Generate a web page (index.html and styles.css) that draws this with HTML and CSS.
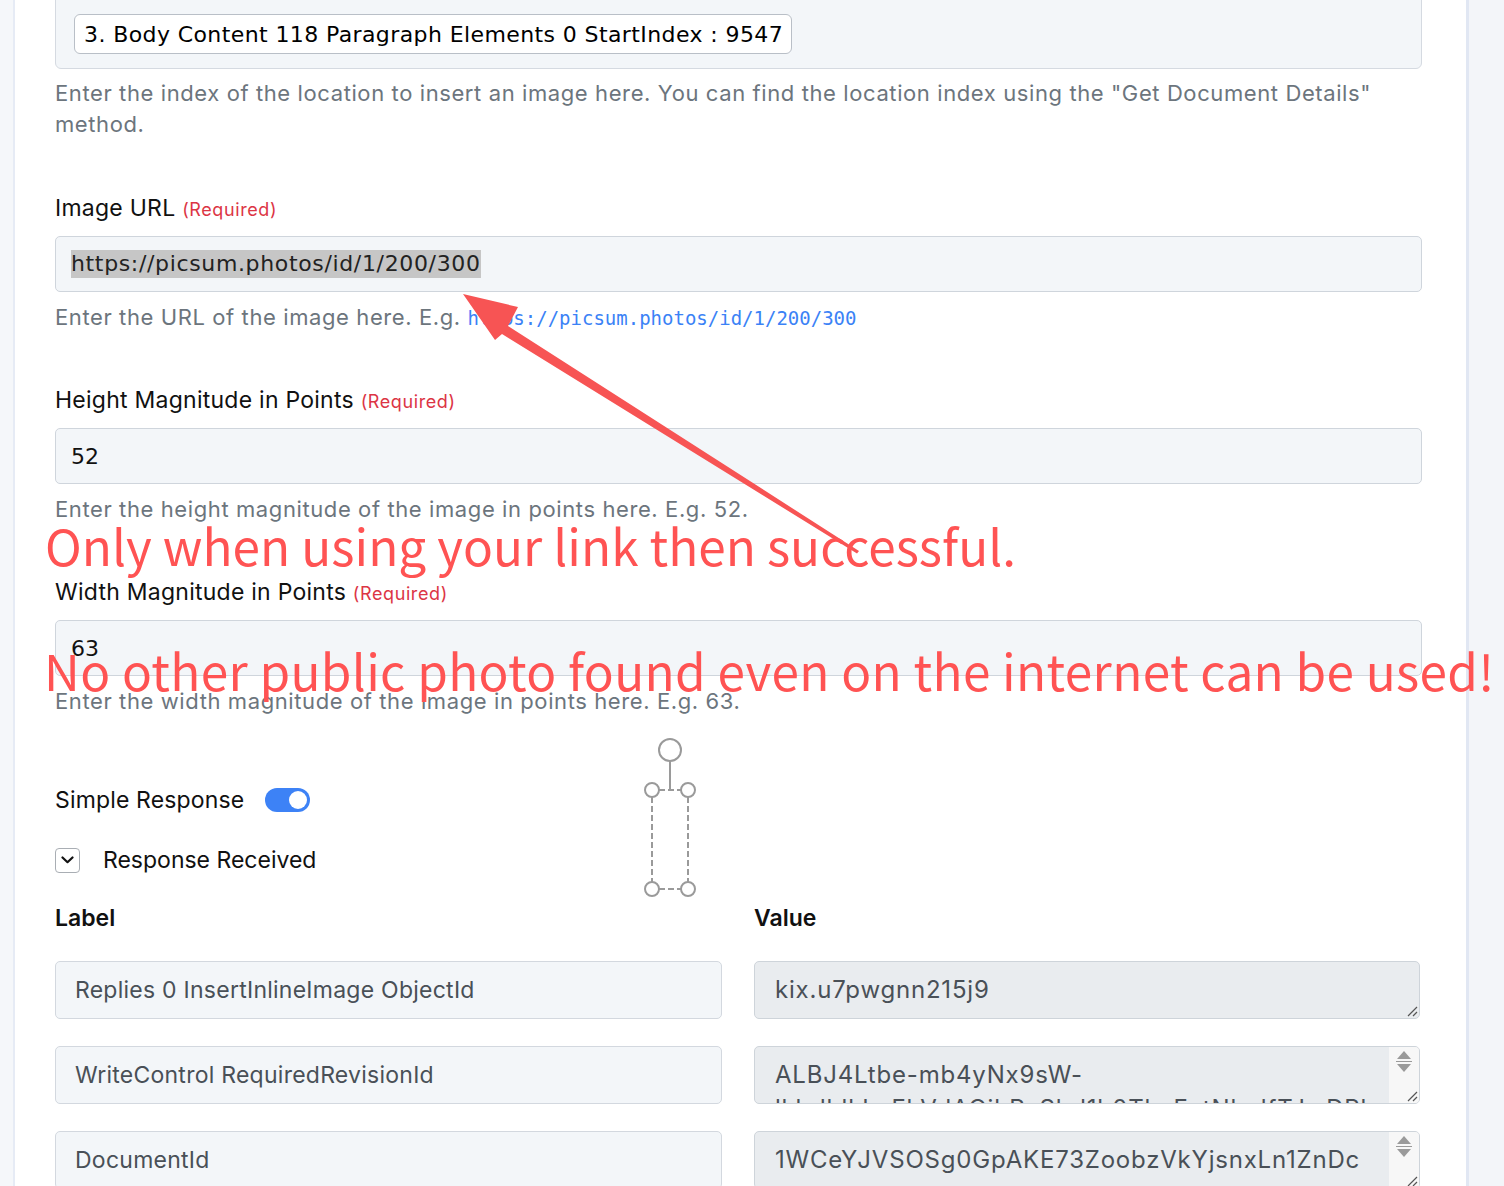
FILE: index.html
```html
<!DOCTYPE html>
<html lang="en">
<head>
<meta charset="utf-8">
<title>Insert Image</title>
<link rel="stylesheet" href="styles.css">
</head>
<body>
<div class="page">
  <div class="gutter-left"></div>
  <main class="panel">
    <div class="index-box">
      <div class="chip">3. Body Content 118 Paragraph Elements 0 StartIndex : 9547</div>
    </div>
    <p class="help help-first">Enter the index of the location to insert an image here. You can find the location index using the "Get Document Details" method.</p>

    <div class="field">
      <div class="label">Image URL <span class="req">(Required)</span></div>
      <div class="input"><span class="sel">https://picsum.photos/id/1/200/300</span></div>
      <p class="help">Enter the URL of the image here. E.g. <code class="link">https://picsum.photos/id/1/200/300</code></p>
    </div>

    <div class="field">
      <div class="label">Height Magnitude in Points <span class="req">(Required)</span></div>
      <div class="input">52</div>
      <p class="help">Enter the height magnitude of the image in points here. E.g. 52.</p>
    </div>

    <div class="field">
      <div class="label">Width Magnitude in Points <span class="req">(Required)</span></div>
      <div class="input">63</div>
      <p class="help">Enter the width magnitude of the image in points here. E.g. 63.</p>
    </div>

    <div class="switch-row">
      <span>Simple Response</span>
      <span class="toggle"><span class="knob"></span></span>
    </div>

    <div class="collapse-row">
      <span class="chev"><svg width="13" height="8" viewBox="0 0 13 8"><path d="M1.5 1.5 L6.5 6.2 L11.5 1.5" fill="none" stroke="#111" stroke-width="2.2" stroke-linecap="round" stroke-linejoin="round"/></svg></span>
      <span>Response Received</span>
    </div>

    <div class="grid">
      <div class="col-head">Label</div>
      <div class="col-head">Value</div>

      <div class="cell">Replies 0 InsertInlineImage ObjectId</div>
      <div class="value">kix.u7pwgnn215j9
        <svg class="grip" width="14" height="14" viewBox="0 0 14 14"><path d="M13 4 L4 13 M13 9 L9 13" stroke="#555" stroke-width="1.2"/></svg>
      </div>

      <div class="cell">WriteControl RequiredRevisionId</div>
      <div class="value has-scroll">ALBJ4Ltbe-mb4yNx9sW-<br>lkbdhlkLuFhVdAOjhRcSbd1h0TkgFxtNbnlfTJwDPl
        <div class="scrollbar"><span class="up"></span><span class="sep"></span><span class="down"></span></div>
        <svg class="grip" width="14" height="14" viewBox="0 0 14 14"><path d="M13 4 L4 13 M13 9 L9 13" stroke="#555" stroke-width="1.2"/></svg>
      </div>

      <div class="cell">DocumentId</div>
      <div class="value has-scroll">1WCeYJVSOSg0GpAKE73ZoobzVkYjsnxLn1ZnDc
        <div class="scrollbar"><span class="up"></span><span class="sep"></span><span class="down"></span></div>
        <svg class="grip" width="14" height="14" viewBox="0 0 14 14"><path d="M13 4 L4 13 M13 9 L9 13" stroke="#555" stroke-width="1.2"/></svg>
      </div>
    </div>
  </main>
  <div class="gutter-right"></div>
</div>

<svg class="arrow" width="1504" height="1186" viewBox="0 0 1504 1186">
  <polygon points="463,294 518,307 508,326 859,551 857,553.5 502,334 495,340" fill="#f75454"/>
</svg>

<svg class="handles" width="60" height="170" viewBox="640 735 60 170">
  <g fill="none" stroke="#9a9a9a" stroke-width="2">
    <circle cx="670" cy="750" r="11"/>
    <line x1="670" y1="761" x2="670" y2="790"/>
    <circle cx="652" cy="790" r="7"/>
    <circle cx="688" cy="790" r="7"/>
    <circle cx="652" cy="889" r="7"/>
    <circle cx="688" cy="889" r="7"/>
    <g stroke-dasharray="6 3">
      <line x1="659" y1="790" x2="681" y2="790"/>
      <line x1="659" y1="889" x2="681" y2="889"/>
      <line x1="652" y1="797" x2="652" y2="882"/>
      <line x1="688" y1="797" x2="688" y2="882"/>
    </g>
  </g>
</svg>

<div class="note note-one">Only when using your link then successful.</div>
<div class="note note-two">No other public photo found even on the internet can be used!</div>
</body>
</html>
```

FILE: styles.css
```css
* { box-sizing: border-box; }

html, body {
  margin: 0;
  padding: 0;
  height: 100%;
  overflow: hidden;
}

body {
  background: #f4f6fa;
  font-family: "Inter", "Lato", sans-serif;
  color: #111;
  position: relative;
}

.page {
  display: flex;
  min-height: 1186px;
}

.gutter-left {
  width: 15px;
  flex: none;
  background: #f5f7fa;
  border-right: 2px solid #e6ebf5;
}

.gutter-right {
  width: 38px;
  flex: none;
  background: #f3f5f9;
  border-left: 3px solid #e1e7f3;
}

.panel {
  flex: 1;
  background: #fff;
  padding: 0 44px 0 40px;
  display: flex;
  flex-direction: column;
}

.index-box {
  margin-top: -10px;
  background: #f3f6f9;
  border: 1px solid #d5dae1;
  border-radius: 6px;
  padding: 23px 18px 14px;
}

.chip {
  display: inline-flex;
  align-items: center;
  height: 40px;
  padding: 0 8px 0 9px;
  background: #fff;
  border: 1px solid #b9bfc7;
  border-radius: 6px;
  font-family: "DejaVu Sans", "Verdana", sans-serif;
  font-size: 22px;
  letter-spacing: 0.4px;
  color: #000;
}

.help {
  margin: 10px 0 0;
  font-size: 22px;
  letter-spacing: 0.6px;
  line-height: 30px;
  color: #6c757d;
}

.help-first {
  margin-top: 9px;
  line-height: 31px;
}

.link {
  font-family: "DejaVu Sans Mono", "Liberation Mono", monospace;
  font-size: 19px;
  line-height: 1;
  letter-spacing: 0;
  color: #3b82f6;
}

.field {
  margin-top: 53px;
  display: flex;
  flex-direction: column;
}

.label {
  height: 30px;
  font-size: 23px;
  letter-spacing: 0.25px;
  line-height: 30px;
  color: #111;
  margin-bottom: 13px;
}

.req {
  font-size: 18px;
  line-height: 1;
  letter-spacing: 0.6px;
  color: #dc3545;
}

.input {
  height: 56px;
  flex: none;
  display: flex;
  align-items: center;
  padding-left: 15px;
  background: #f3f6f9;
  border: 1px solid #cfd5dc;
  border-radius: 5px;
  font-family: "DejaVu Sans", "Verdana", sans-serif;
  font-size: 22px;
  color: #111;
}

.sel {
  background: #c6c6c6;
  line-height: 28px;
  letter-spacing: 0.65px;
  color: #222;
}

.switch-row {
  margin-top: 68px;
  height: 32px;
  display: flex;
  align-items: center;
  gap: 21px;
  font-size: 23px;
  letter-spacing: 0.15px;
}

.toggle {
  width: 45px;
  height: 24px;
  border-radius: 12px;
  background: #3d82f6;
  display: flex;
  align-items: center;
  justify-content: flex-end;
  padding-right: 3px;
}

.knob {
  width: 18px;
  height: 18px;
  border-radius: 50%;
  background: #fff;
}

.collapse-row {
  margin-top: 28px;
  height: 32px;
  display: flex;
  align-items: center;
  gap: 23px;
  font-size: 23px;
}

.chev {
  width: 25px;
  height: 25px;
  border: 1px solid #a9aeb4;
  border-radius: 4px;
  display: flex;
  align-items: center;
  justify-content: center;
}

.grid {
  margin-top: 26px;
  display: grid;
  grid-template-columns: 667px 666px;
  column-gap: 32px;
  row-gap: 27px;
}

.col-head {
  height: 32px;
  line-height: 32px;
  font-size: 23px;
  font-weight: 600;
}

.cell {
  height: 58px;
  display: flex;
  align-items: center;
  padding-left: 19px;
  background: #f3f6f9;
  border: 1px solid #d3d8df;
  border-radius: 5px;
  font-size: 23px;
  letter-spacing: 0.25px;
  color: #495057;
}

.value {
  position: relative;
  height: 58px;
  overflow: hidden;
  padding: 11px 0 0 20px;
  background: #e9ecef;
  border: 1px solid #ced4da;
  border-radius: 5px;
  font-size: 24px;
  letter-spacing: 0.8px;
  line-height: 34px;
  color: #495057;
  white-space: nowrap;
}

.grip {
  position: absolute;
  right: 1px;
  bottom: 1px;
}

.scrollbar {
  position: absolute;
  top: 0;
  right: 0;
  bottom: 0;
  width: 30px;
  background: #f7f7f7;
  display: flex;
  flex-direction: column;
  align-items: center;
}

.scrollbar .up,
.scrollbar .down {
  width: 0;
  height: 0;
  border-left: 7px solid transparent;
  border-right: 7px solid transparent;
}

.scrollbar .up {
  margin-top: 4px;
  border-bottom: 8px solid #9a9a9a;
}

.scrollbar .down {
  border-top: 8px solid #9a9a9a;
}

.scrollbar .sep {
  width: 16px;
  height: 1px;
  background: #9a9a9a;
  margin: 2px 0;
}

.arrow {
  position: absolute;
  left: 0;
  top: 0;
  pointer-events: none;
}

.handles {
  position: absolute;
  left: 640px;
  top: 735px;
}

.note {
  position: absolute;
  left: 45px;
  font-family: "Noto Sans CJK SC", "Noto Sans", sans-serif;
  font-size: 49.5px;
  line-height: 1;
  color: #ff5353;
  white-space: nowrap;
  pointer-events: none;
}

.note-one {
  top: 520px;
}

.note-two {
  top: 645px;
  left: 44px;
  letter-spacing: 0.34px;
}
```
